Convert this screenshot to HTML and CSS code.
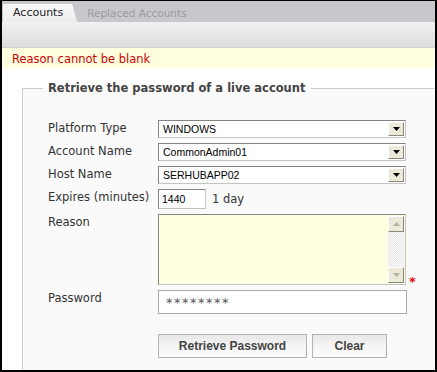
FILE: index.html
```html
<!DOCTYPE html>
<html>
<head>
<meta charset="utf-8">
<title>Accounts</title>
<link rel="stylesheet" href="styles.css">
</head>
<body>
<div id="win">
  <ul class="tabs">
    <li class="current">Accounts</li>
    <li class="normal">Replaced Accounts</li>
  </ul>
  <div class="toolbar"></div>
  <div class="msg">Reason cannot be blank</div>
  <div class="main">
    <fieldset class="box">
      <legend>Retrieve the password of a live account</legend>
      <div class="form">
        <label>Platform Type</label>
        <div class="sel"><span>WINDOWS</span><i class="drop"><svg width="7" height="4" viewBox="0 0 7 4"><path d="M0 0h7L3.5 4z" fill="#000"/></svg></i></div>

        <label>Account Name</label>
        <div class="sel"><span>CommonAdmin01</span><i class="drop"><svg width="7" height="4" viewBox="0 0 7 4"><path d="M0 0h7L3.5 4z" fill="#000"/></svg></i></div>

        <label>Host Name</label>
        <div class="sel"><span>SERHUBAPP02</span><i class="drop"><svg width="7" height="4" viewBox="0 0 7 4"><path d="M0 0h7L3.5 4z" fill="#000"/></svg></i></div>

        <label>Expires (minutes)</label>
        <div class="row"><div class="num">1440</div><span class="unit">1 day</span></div>

        <label>Reason</label>
        <div class="row bottom">
          <div class="ta">
            <div class="sb">
              <i class="sbb"><svg width="7" height="4" viewBox="0 0 7 4"><path d="M0 4h7L3.5 0z" fill="#b5b2a6"/></svg></i>
              <i class="sbb"><svg width="7" height="4" viewBox="0 0 7 4"><path d="M0 0h7L3.5 4z" fill="#b5b2a6"/></svg></i>
            </div>
          </div>
          <span class="req">*</span>
        </div>

        <label>Password</label>
        <div class="pw">********</div>
      </div>
      <div class="btns">
        <button class="btn wide">Retrieve Password</button>
        <button class="btn">Clear</button>
      </div>
    </fieldset>
  </div>
</div>
</body>
</html>
```

FILE: styles.css
```css
*{margin:0;padding:0}
body{font-family:"DejaVu Sans",Verdana,sans-serif;font-size:11.5px;color:#333;background:#fff;}
#win{width:437px;height:372px;box-sizing:border-box;border:solid #000;border-width:1px 2px 2px 2px;overflow:hidden;background:#fff;}

/* tabs */
.tabs{list-style:none;height:21px;background:#c8c8cc;display:flex;align-items:flex-end;padding-left:1px;}
.tabs li{height:18px;line-height:18px;font-size:11px;}
.tabs .current{background:linear-gradient(#f8f8f8,#ededef);padding:0 14px 0 10px;border-radius:2px 0 0 0;clip-path:polygon(0 0,calc(100% - 5px) 0,100% 100%,0 100%);color:#222;}
.tabs .normal{color:#9a9a9a;padding-left:10px;font-size:10.5px;}
.toolbar{height:25px;background:linear-gradient(#f1f1f3,#dcdcdf);border-bottom:1px solid #cfcfd2;}
.msg{height:23px;line-height:22px;padding-left:10px;color:#c00;background:linear-gradient(#ffffe0 80%,#fff);}

/* form box */
.main{padding:9px 0 0 20px;}
.box{width:440px;min-height:300px;border:none;border-top:1px solid #cdcdcd;border-left:1px solid #cdcdcd;background:#fafafa;padding:0 0 0 25px;}
.box legend{font-weight:bold;font-size:11.5px;line-height:16px;color:#444;padding:0 5px;margin-left:-5px;}
.form{display:grid;grid-template-columns:110px auto;row-gap:5px;align-items:start;margin-top:24px;}
.form label{line-height:16px;color:#333;}
.row{display:flex;align-items:center;}
.row.bottom{align-items:flex-end;}

.sel,.num,.ta{box-sizing:border-box;border:1px solid;border-color:#848484 #c4c4c4 #c4c4c4 #848484;background:#fff;}
.sel{width:248px;height:18px;display:flex;align-items:center;justify-content:space-between;padding-left:4px;font-family:"Liberation Sans",Arial,sans-serif;font-size:10.5px;color:#000;}
.drop,.sbb{box-sizing:border-box;display:flex;align-items:center;justify-content:center;background:#ece9d8;border:1px solid;border-color:#fff #8a877c #8a877c #fff;}
.drop{width:16px;height:14px;margin-right:1px;}
.num{width:48px;height:20px;line-height:18px;padding-left:3px;font-family:"Liberation Sans",Arial,sans-serif;font-size:10.5px;color:#000;}
.unit{margin-left:6px;color:#333;}
.ta{width:248px;height:71px;background:#ffffe1;display:flex;justify-content:flex-end;padding:1px;}
.sb{width:16px;display:flex;flex-direction:column;justify-content:space-between;background:repeating-conic-gradient(#e4e4e4 0 25%,#fff 0 50%) 0 0/2px 2px;}
.sbb{height:16px;}
.req{color:#e00;font-weight:bold;font-size:13px;line-height:10px;margin-left:3px;margin-bottom:-2px;}
.pw{box-sizing:border-box;width:249px;height:24px;border:1px solid #a9a9a9;background:#fff;color:#555;padding-left:7px;line-height:24px;font-size:13px;letter-spacing:1.5px;}

/* buttons */
.btns{display:flex;gap:5px;margin:20px 0 0 110px;}
.btn{height:24px;width:75px;border:1px solid #b4b4b4;background:linear-gradient(#e8e8e8,#f4f4f4 50%,#fdfdfd);font-family:"Liberation Sans",Arial,sans-serif;font-weight:bold;font-size:12px;color:#444;}
.btn.wide{width:149px;}
```
